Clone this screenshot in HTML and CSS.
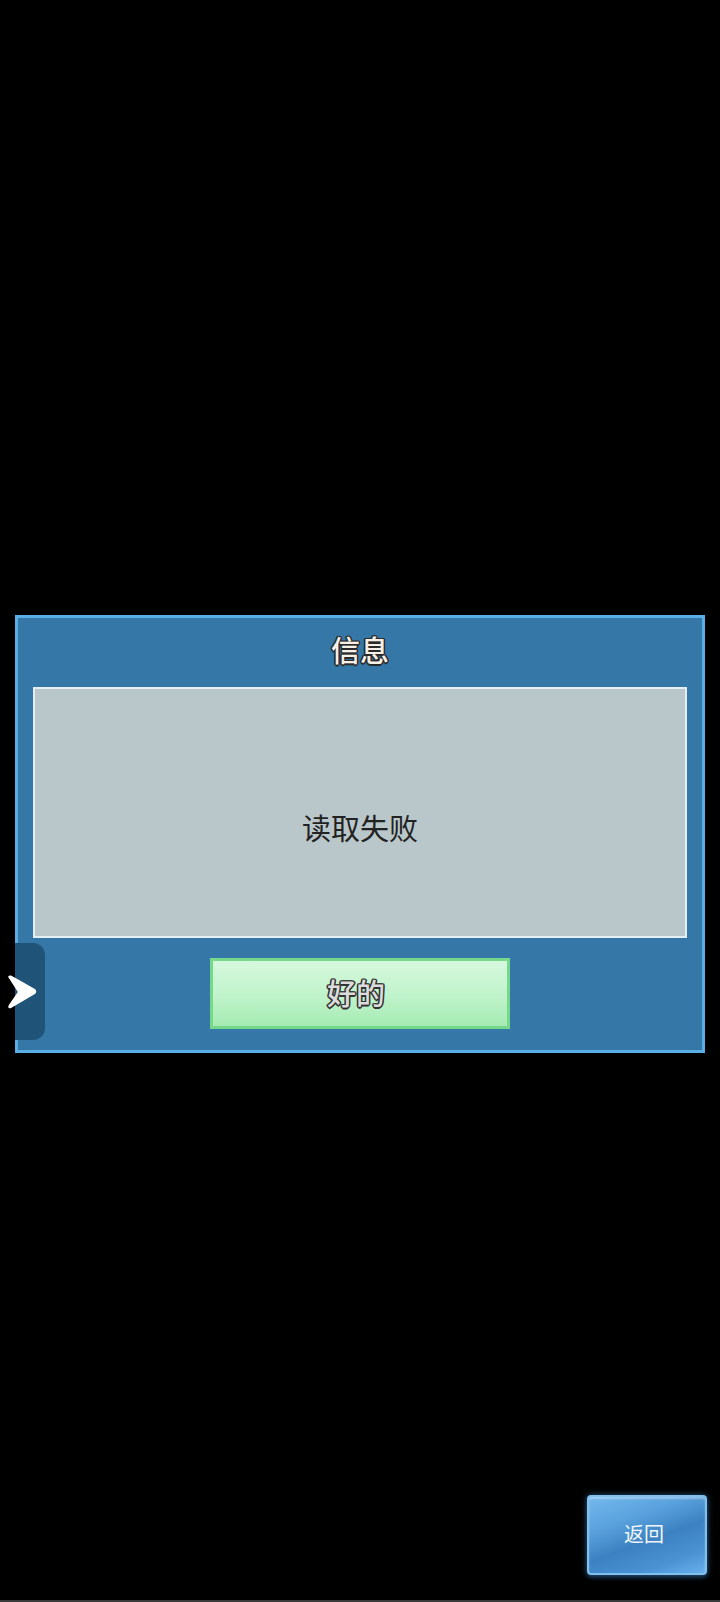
FILE: index.html
```html
<!DOCTYPE html>
<html>
  <head>
    <title>信息</title>
    <meta name="viewport" content="width=device-width, initial-scale=1">
    <link rel="stylesheet" href="styles.css">
  </head>
  <body>
    <div class="screen">
      <div class="dialog">
        <div class="dialog-title">信息</div>
        <div class="dialog-body">读取失败</div>
        <div class="dialog-actions">
          <button class="ok-button" type="button">好的</button>
        </div>
        <div class="side-tab">
          <svg class="side-arrow" width="30" height="34" viewBox="0 0 30 34">
            <path d="M3 3 Q1 1 4 1.5 L27 14.5 Q29.5 16.5 27 18.5 L4 32 Q1 33 3 30 L12 17 Z" fill="#ffffff" stroke="#ffffff" stroke-width="2" stroke-linejoin="round"/>
          </svg>
        </div>
      </div>
      <div class="footer">
        <button class="back-button" type="button">返回</button>
      </div>
    </div>
  </body>
</html>
```

FILE: styles.css
```css
html, body {
  margin: 0;
  background: #000;
}
body {
  width: 720px;
  height: 1602px;
  overflow: hidden;
  font-family: "Noto Sans CJK SC", "Noto Sans", sans-serif;
}
.screen {
  display: flex;
  flex-direction: column;
  height: 1602px;
  box-sizing: border-box;
  padding-top: 615px;
  border-bottom: 2px solid #3a3a3a;
}
.dialog {
  position: relative;
  margin-left: 15px;
  width: 690px;
  height: 438px;
  box-sizing: border-box;
  border: 3px solid #5aaee6;
  background: #3577a7;
  padding: 0 15px;
  display: flex;
  flex-direction: column;
}
.dialog-title {
  height: 69px;
  display: flex;
  align-items: center;
  justify-content: center;
  padding-bottom: 8px;
  box-sizing: border-box;
  font-size: 29px;
  font-weight: 500;
  color: #f6f0e6;
  text-shadow: -1.5px 0 #2a2a2a, 1.5px 0 #2a2a2a, 0 -1.5px #2a2a2a, 0 1.5px #2a2a2a,
    -1px -1px #2a2a2a, 1px 1px #2a2a2a, -1px 1px #2a2a2a, 1px -1px #2a2a2a;
}
.dialog-body {
  height: 251px;
  box-sizing: border-box;
  border: 2px solid #e4eef3;
  background: #b9c7cb;
  display: flex;
  align-items: center;
  justify-content: center;
  padding-top: 28px;
  font-size: 29px;
  color: #222;
}
.dialog-actions {
  display: flex;
  justify-content: center;
  padding-top: 20px;
}
.ok-button {
  width: 300px;
  height: 71px;
  box-sizing: border-box;
  border: 3px solid #76d98a;
  background: linear-gradient(180deg, #d6f8dd 0%, #bff3ca 55%, #a6ebb3 100%);
  font-family: inherit;
  font-size: 29px;
  font-weight: 500;
  color: #dcdcdc;
  padding: 0 8px 4px 0;
  text-shadow: -1.5px 0 #333, 1.5px 0 #333, 0 -1.5px #333, 0 1.5px #333,
    -1px -1px #333, 1px 1px #333, -1px 1px #333, 1px -1px #333;
}
.side-tab {
  position: absolute;
  left: -3px;
  top: 325px;
  width: 30px;
  height: 97px;
  background: #1f5478;
  border-radius: 0 12px 12px 0;
}
.side-arrow {
  position: absolute;
  left: -8px;
  top: 32px;
}
.footer {
  display: flex;
  justify-content: flex-end;
  padding: 442px 13px 0 0;
}
.back-button {
  width: 120px;
  height: 80px;
  box-sizing: border-box;
  border: 2px solid #7fc0ee;
  border-radius: 4px;
  background: linear-gradient(160deg, #74b8ec 0%, #5aa2de 30%, #3c82c2 55%, #4a92d2 80%, #68b0ec 100%);
  box-shadow: 0 0 6px rgba(90, 160, 230, 0.5), inset 0 2px 2px rgba(255, 255, 255, 0.35), 0 3px 4px #0d2235;
  font-family: inherit;
  font-size: 20px;
  color: #f2f6fa;
  padding: 0 6px 4px 0;
}
```
